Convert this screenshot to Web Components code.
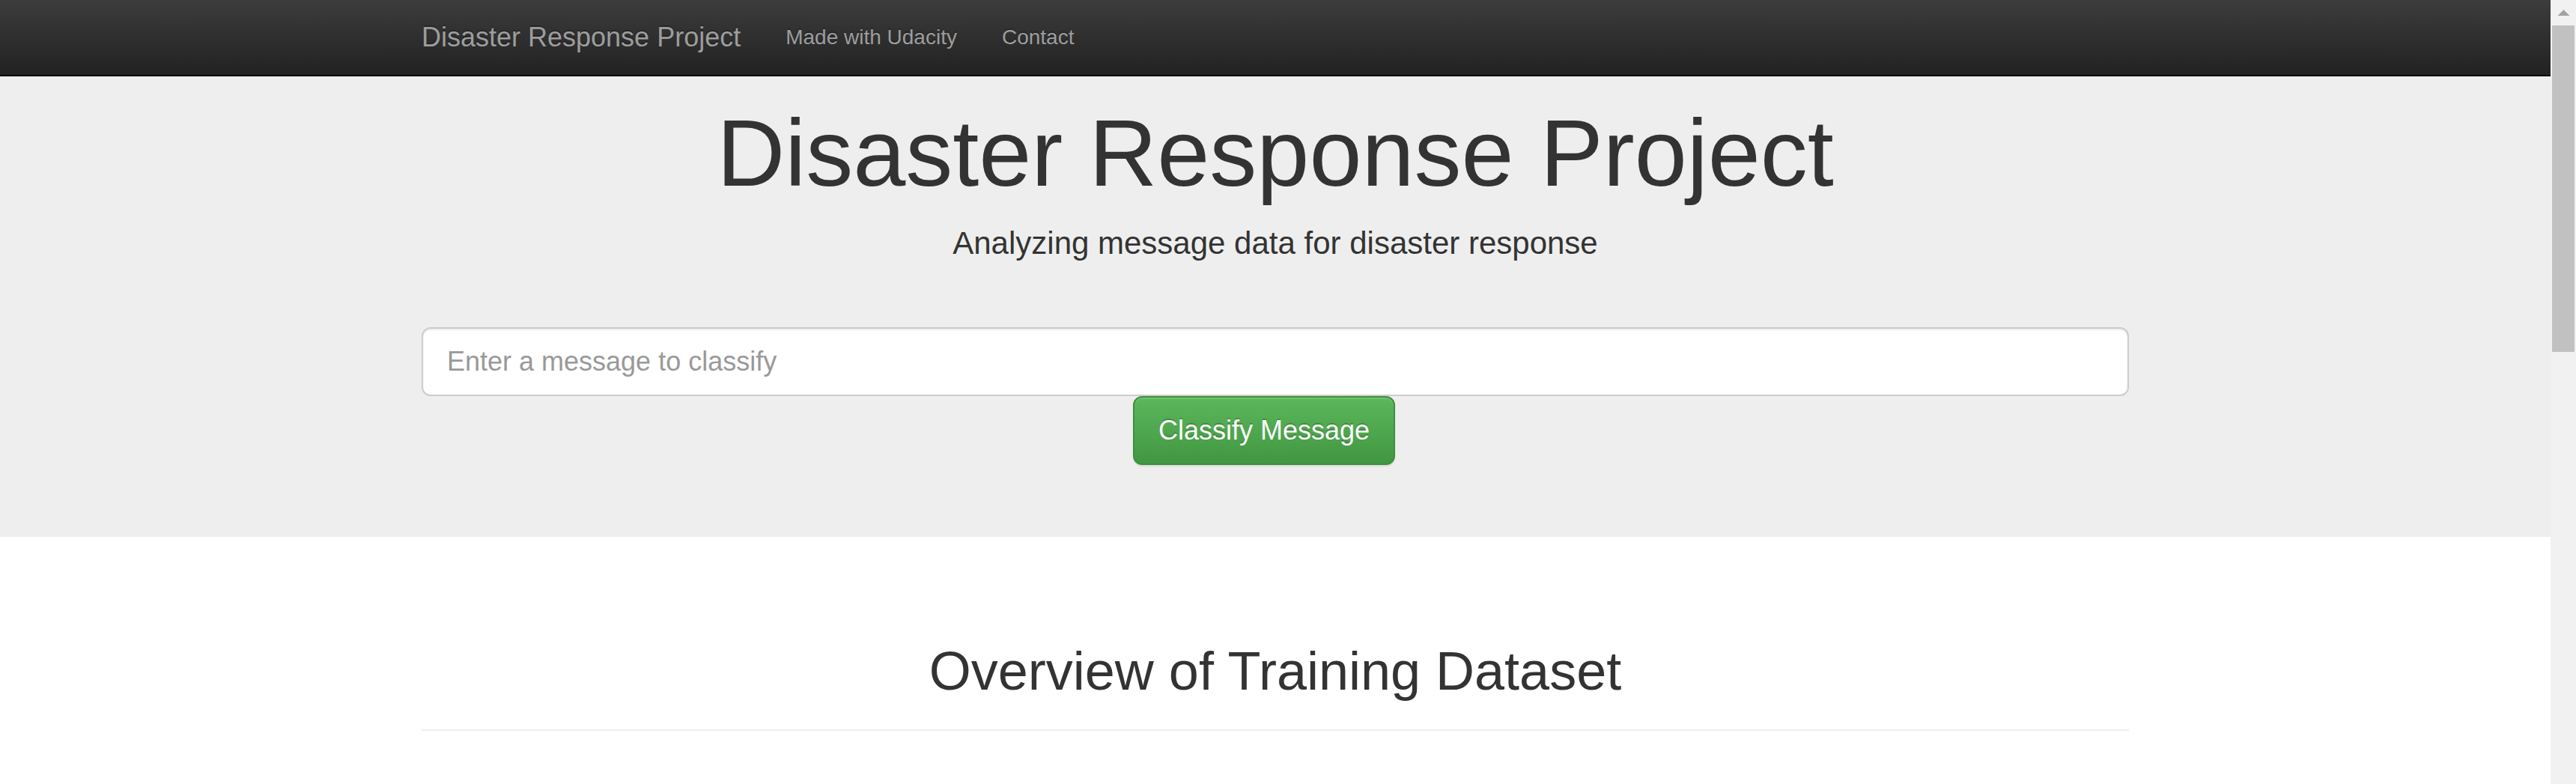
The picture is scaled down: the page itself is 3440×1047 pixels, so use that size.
<!DOCTYPE html>
<html lang="en">
<head>
<meta charset="utf-8">
<title>Disaster Response Project</title>
<style>
  html, body { margin: 0; height: 100%; }
  body {
    --gutter: 30px;
    --container: 2280px;
    background: #fff;
    color: #333;
    font-family: "Liberation Sans", Arial, sans-serif;
    font-size: 28px;
    line-height: 40px;
  }
</style>
</head>
<body>
<app-shell>
  <nav-bar>
    <nav-link slot="brand" brand href="#home">Disaster Response Project</nav-link>
    <nav-link href="#udacity">Made with Udacity</nav-link>
    <nav-link href="#contact">Contact</nav-link>
  </nav-bar>
  <hero-banner>
    <span slot="title">Disaster Response Project</span>
    <span slot="lead">Analyzing message data for disaster response</span>
    <classify-form></classify-form>
  </hero-banner>
  <page-header>Overview of Training Dataset</page-header>
</app-shell>

<script>
  const define = (name, html, setup) => {
    const template = document.createElement('template');
    template.innerHTML = html;
    customElements.define(name, class extends HTMLElement {
      constructor() {
        super();
        this.attachShadow({ mode: 'open' }).append(template.content.cloneNode(true));
      }
      connectedCallback() { if (setup) setup(this, this.shadowRoot); }
    });
  };

  define('scroll-rail', `
    <style>
      :host { display: flex; flex-direction: column; box-sizing: border-box; width: 34px; flex: none; background: #f1f1f1; }
      .arrow { display: flex; align-items: center; justify-content: center; height: 34px; flex: none; }
      .track { flex: 1; padding: 0 2px; min-height: 0; }
      .thumb { height: 43%; background: #c1c1c1; }
      svg { display: block; }
    </style>
    <div class="arrow"><svg width="16" height="8" viewBox="0 0 16 8" shape-rendering="crispEdges"><path d="M8 0 16 8H0z" fill="#a3a3a3"/></svg></div>
    <div class="track"><div class="thumb"></div></div>`);

  define('app-shell', `
    <style>
      :host { display: flex; height: 100vh; }
      main { flex: 1; min-width: 0; overflow: hidden; }
    </style>
    <main><slot></slot></main>
    <scroll-rail aria-hidden="true"></scroll-rail>`);

  define('nav-link', `
    <style>
      :host { display: block; }
      a { display: block; padding: 30px var(--gutter); color: #9d9d9d; text-decoration: none; text-shadow: 0 -2px 0 rgba(0,0,0,.25); white-space: nowrap; }
      a:hover { color: #fff; }
      :host([brand]) a { padding-left: 0; font-size: 36px; }
    </style>
    <a><slot></slot></a>`,
    (host, root) => { root.querySelector('a').href = host.getAttribute('href'); });

  define('nav-bar', `
    <style>
      :host { display: block; background: linear-gradient(#3c3c3c, #222); border-bottom: 2px solid #080808; padding: 0 var(--gutter); }
      nav { display: flex; max-width: var(--container); margin: 0 auto; }
    </style>
    <nav><slot name="brand"></slot><slot></slot></nav>`);

  define('hero-banner', `
    <style>
      :host { display: block; background: #eee; padding: 33px var(--gutter) 96px; text-align: center; }
      .container { max-width: var(--container); margin: 0 auto; }
      h1 { margin: 0 0 21px; font-size: 126px; line-height: 139px; font-weight: 400; }
      p { margin: 0 0 82px; font-size: 42px; line-height: 60px; }
    </style>
    <div class="container">
      <h1><slot name="title"></slot></h1>
      <p><slot name="lead"></slot></p>
      <slot></slot>
    </div>`);

  define('classify-form', `
    <style>
      :host { display: block; }
      form { display: flex; flex-direction: column; margin: 0; }
      input, button { box-sizing: border-box; margin: 0; border: 2px solid #ccc; border-radius: 12px; padding: 20px 32px; font: inherit; font-size: 36px; line-height: 48px; }
      input { width: 100%; height: 92px; background: #fff; color: #555; box-shadow: inset 0 2px 2px rgba(0,0,0,.075); }
      input::placeholder { color: #999; opacity: 1; }
      .actions { display: flex; justify-content: center; padding-right: var(--gutter); }
      button { color: #fff; border-color: #3e8f3e; background: linear-gradient(#5cb85c, #419641) border-box; text-shadow: 0 -2px 0 rgba(0,0,0,.2); box-shadow: inset 0 2px 0 rgba(255,255,255,.15), 0 2px 2px rgba(0,0,0,.075); cursor: pointer; }
    </style>
    <form>
      <input type="text" name="query" aria-label="Enter a message to classify" placeholder="Enter a message to classify">
      <div class="actions"><button type="submit">Classify Message</button></div>
    </form>`,
    (host, root) => root.querySelector('form').addEventListener('submit', e => e.preventDefault()));

  define('page-header', `
    <style>
      :host { display: block; padding: 140px var(--gutter) 40px; }
      header { max-width: var(--container); margin: 0 auto; padding-bottom: 38px; border-bottom: 2px solid #eee; text-align: center; }
      h1 { margin: 0; font-size: 72px; line-height: 79px; font-weight: 400; }
    </style>
    <header><h1><slot></slot></h1></header>`);
</script>
</body>
</html>
